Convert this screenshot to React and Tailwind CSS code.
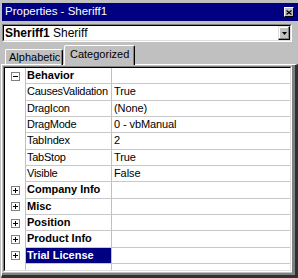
import React from "react";

function Box({ open }) {
  return (
    <svg width="9" height="9" viewBox="0 0 9 9" className="block">
      <rect x="0.5" y="0.5" width="8" height="8" fill="#ffffff" stroke="#808080" />
      <line x1="2" y1="4.5" x2="7" y2="4.5" stroke="#000000" />
      {!open && <line x1="4.5" y1="2" x2="4.5" y2="7" stroke="#000000" />}
    </svg>
  );
}

const rows = [
  { name: "Behavior", group: true, open: true },
  { name: "CausesValidation", value: "True" },
  { name: "DragIcon", value: "(None)" },
  { name: "DragMode", value: "0 - vbManual" },
  { name: "TabIndex", value: "2" },
  { name: "TabStop", value: "True" },
  { name: "Visible", value: "False" },
  { name: "Company Info", group: true },
  { name: "Misc", group: true },
  { name: "Position", group: true },
  { name: "Product Info", group: true },
  { name: "Trial License", group: true, selected: true },
];

export default function App() {
  return (
    <div className="w-[298px] h-[278px] bg-[#c0c0c0] flex flex-col overflow-hidden font-['Liberation_Sans',Arial,sans-serif] text-black select-none">
      {/* Title bar */}
      <div className="mt-[3px] ml-[2px] h-[18px] bg-[#000080] flex items-center pl-[3px] pr-[4px]">
        <span className="text-white text-[11.5px] leading-none flex-1">Properties - Sheriff1</span>
        <div className="w-[10px] h-[10px] bg-[#c0c0c0] border-t border-l border-white border-r border-b border-r-black border-b-black flex items-center justify-center">
          <svg width="6" height="5" viewBox="0 0 6 5" className="block">
            <path d="M0.5 0.5 L5.5 4.5 M5.5 0.5 L0.5 4.5" stroke="#000" strokeWidth="1.3" />
          </svg>
        </div>
      </div>

      {/* Combo */}
      <div className="mt-[3px] ml-[2px] w-[290px] h-[18px] border-t border-l border-t-[#808080] border-l-[#808080] border-b border-r border-b-white border-r-white">
        <div className="h-full border-t border-l border-t-black border-l-black border-b border-r border-b-[#dfdfdf] border-r-[#dfdfdf] bg-white flex items-stretch">
          <div className="flex-1 flex items-center pl-[1px] text-[12px] leading-none">
            <span className="font-bold">Sheriff1</span>
            <span>&nbsp;Sheriff</span>
          </div>
          <div className="w-[12px] bg-[#c0c0c0] border-t border-l border-t-[#dfdfdf] border-l-[#dfdfdf] border-b border-r border-b-black border-r-black shadow-[inset_-1px_-1px_#808080,inset_1px_1px_#ffffff] flex items-center justify-center">
            <svg width="5" height="3" viewBox="0 0 5 3" className="block">
              <path d="M0 0 H5 L2.5 3 Z" fill="#000" />
            </svg>
          </div>
        </div>
      </div>

      {/* Tabs */}
      <div className="relative z-10 mt-[3px] -mb-[1px] h-[20px] flex items-end pl-[5px]">
        <div className="w-[58px] h-[16px] rounded-t-[2px] border-t border-l border-t-white border-l-white border-r border-r-black shadow-[inset_-1px_0_#808080] flex items-center pl-[3px] text-[11px] leading-none whitespace-nowrap">
          Alphabetic
        </div>
        <div className="ml-[1px] w-[71px] h-[20px] bg-[#c0c0c0] rounded-t-[2px] border-t border-l border-t-white border-l-white border-r border-r-black shadow-[inset_-1px_0_#808080] flex items-center pb-[2px] pl-[5px] text-[11px] leading-none whitespace-nowrap">
          Categorized
        </div>
      </div>

      {/* Panel */}
      <div className="ml-[1px] flex-1 flex flex-col border-t border-l border-t-white border-l-white border-r-[3px] border-b-[3px] border-r-[#303030] border-b-[#303030]">
        <div className="flex-1 flex flex-col border-r-[3px] border-b-[2px] border-r-[#808080] border-b-[#808080] pl-[1px] pt-[1px] pb-[1px]">
          <div className="flex-1 flex flex-col border-t border-l border-t-[#808080] border-l-[#808080] border-b border-r border-b-white border-r-white">
            <div className="flex-1 flex flex-col bg-white border-t border-l border-t-black border-l-black border-b border-r border-b-[#dfdfdf] border-r-[#dfdfdf] overflow-hidden">
              {rows.map((r) => (
                <div key={r.name} className="h-[16.33px] shrink-0 flex">
                  <div className="w-[21px] flex items-center justify-center border-r border-r-[#c0c0c0]">
                    {r.group && <Box open={r.open} />}
                  </div>
                  <div className="w-[86px] border-r border-r-[#c0c0c0] border-b border-b-[#c8c8c8] flex">
                    <div
                      className={
                        "flex-1 flex items-center pl-[1px] text-[11px] leading-none whitespace-nowrap " +
                        (r.group ? "font-bold " : "tracking-[-0.25px] ") +
                        (r.selected ? "bg-[#000080] text-white" : "")
                      }
                    >
                      {r.name}
                    </div>
                  </div>
                  <div className="flex-1 border-b border-b-[#c8c8c8] flex items-center pl-[2px] text-[11px] leading-none whitespace-nowrap tracking-[-0.1px]">
                    {r.value}
                  </div>
                </div>
              ))}
              <div className="flex-1 flex">
                <div className="w-[21px] border-r border-r-[#c0c0c0]" />
                <div className="w-[86px] border-r border-r-[#c0c0c0]" />
                <div className="flex-1" />
              </div>
            </div>
          </div>
        </div>
      </div>
    </div>
  );
}
